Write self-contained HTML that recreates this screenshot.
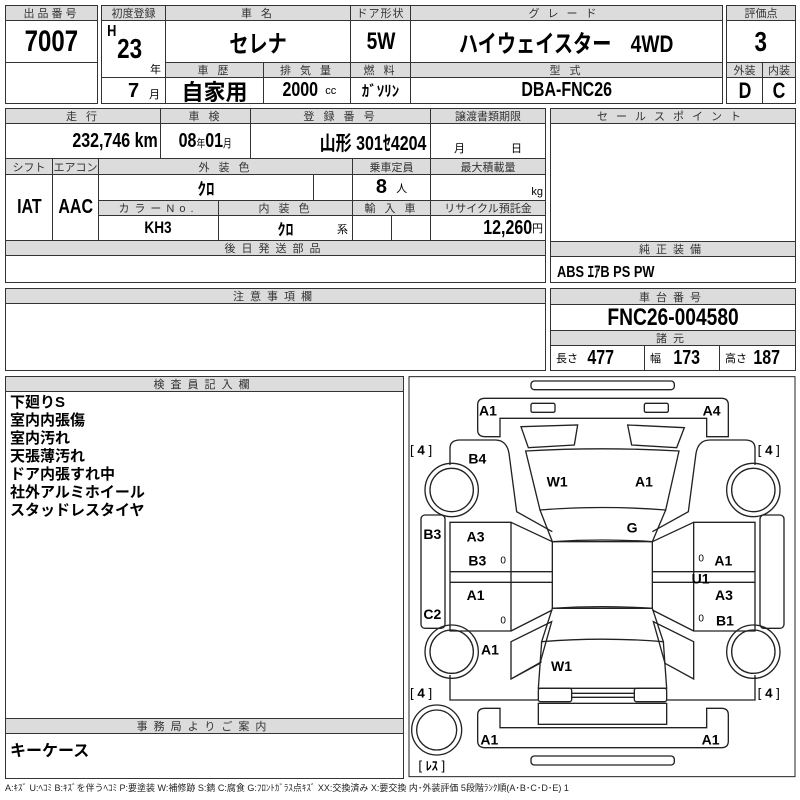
<!DOCTYPE html>
<html><head><meta charset="utf-8"><style>
*{margin:0;padding:0;box-sizing:border-box}
body{width:800px;height:800px;background:#fff;position:relative;overflow:hidden;font-family:"Liberation Sans","Noto Sans CJK JP",sans-serif;color:#000}
.b{position:absolute;border:1px solid #333;display:flex;align-items:center;justify-content:center;white-space:nowrap;overflow:hidden}
.h{background:#dcdcdc;font-size:11px;letter-spacing:3px;color:#333}
.v{font-weight:bold;font-size:20px}
.k{display:inline-block;transform:scaleX(.8)}
.s{font-size:11px;font-weight:normal}
</style></head><body>
<!-- top left -->
<div class="b" style="left:5px;top:5px;width:93px;height:99px;"></div>
<div class="b h" style="left:5px;top:5px;width:93px;height:16px">出品番号</div>
<div class="b v" style="left:5px;top:20px;width:93px;height:43px;font-size:30px"><span class="k">7007</span></div>
<!-- top middle -->
<div class="b" style="left:101px;top:5px;width:622px;height:99px"></div>
<div class="b h" style="left:101px;top:5px;width:65px;height:16px;letter-spacing:0">初度登録</div>
<div class="b h" style="left:165px;top:5px;width:186px;height:16px">車 名</div>
<div class="b h" style="left:350px;top:5px;width:61px;height:16px;letter-spacing:1px">ドア形状</div>
<div class="b h" style="left:410px;top:5px;width:313px;height:16px;letter-spacing:8px">グレード</div>
<div class="b" style="left:101px;top:20px;width:65px;height:84px;display:block">
 <span style="position:absolute;left:4px;top:2px;font-weight:bold;font-size:16px" class="k">H</span>
 <span style="position:absolute;left:12px;top:12px;font-weight:bold;font-size:28px" class="k">23</span>
 <span style="position:absolute;left:48px;top:40px;font-size:11px">年</span>
 <div style="position:absolute;left:0;top:56px;width:64px;border-top:1px solid #333"></div>
 <span style="position:absolute;left:26px;top:59px;font-weight:bold;font-size:20px">7</span>
 <span style="position:absolute;left:47px;top:65px;font-size:11px">月</span>
</div>
<div class="b v" style="left:165px;top:20px;width:186px;height:43px;font-size:24px"><span class="k">セレナ</span></div>
<div class="b v" style="left:350px;top:20px;width:61px;height:43px;font-size:24px"><span class="k">5W</span></div>
<div class="b v" style="left:410px;top:20px;width:313px;height:43px;font-size:24px"><span class="k">ハイウェイスター　4WD</span></div>
<div class="b h" style="left:165px;top:62px;width:99px;height:16px">車 歴</div>
<div class="b h" style="left:263px;top:62px;width:88px;height:16px">排 気 量</div>
<div class="b h" style="left:350px;top:62px;width:61px;height:16px">燃 料</div>
<div class="b h" style="left:410px;top:62px;width:313px;height:16px">型 式</div>
<div class="b v" style="left:165px;top:77px;width:99px;height:27px;font-size:22px">自家用</div>
<div class="b v" style="left:263px;top:77px;width:88px;height:27px"><span class="k">2000</span><span class="s">&nbsp;cc</span></div>
<div class="b v" style="left:350px;top:77px;width:61px;height:27px;font-size:15px">ｶﾞｿﾘﾝ</div>
<div class="b v" style="left:410px;top:77px;width:313px;height:27px"><span class="k">DBA-FNC26</span></div>
<!-- top right -->
<div class="b h" style="left:726px;top:5px;width:70px;height:16px;letter-spacing:0">評価点</div>
<div class="b v" style="left:726px;top:20px;width:70px;height:43px;font-size:28px"><span class="k">3</span></div>
<div class="b h" style="left:726px;top:62px;width:37px;height:16px;letter-spacing:0">外装</div>
<div class="b h" style="left:762px;top:62px;width:34px;height:16px;letter-spacing:0">内装</div>
<div class="b v" style="left:726px;top:77px;width:37px;height:27px;font-size:22px"><span class="k">D</span></div>
<div class="b v" style="left:762px;top:77px;width:34px;height:27px;font-size:22px"><span class="k">C</span></div>
<!-- second block -->
<div class="b h" style="left:5px;top:108px;width:156px;height:16px">走 行</div>
<div class="b h" style="left:160px;top:108px;width:91px;height:16px">車 検</div>
<div class="b h" style="left:250px;top:108px;width:181px;height:16px">登 録 番 号</div>
<div class="b h" style="left:430px;top:108px;width:116px;height:16px;letter-spacing:0">譲渡書類期限</div>
<div class="b v" style="left:5px;top:123px;width:156px;height:36px;justify-content:flex-end;padding-right:2px"><span class="k" style="transform-origin:right">232,746 km</span></div>
<div class="b v" style="left:160px;top:123px;width:91px;height:36px"><span class="k">08<span class="s">年</span>01<span class="s">月</span></span></div>
<div class="b v" style="left:250px;top:123px;width:181px;height:36px;justify-content:flex-end;padding-right:4px"><span class="k" style="transform-origin:right">山形 301ｾ4204</span></div>
<div class="b" style="left:430px;top:123px;width:116px;height:36px;align-items:flex-end;justify-content:space-around;font-size:11px;padding-bottom:2px"><span>月</span><span>日</span></div>
<div class="b h" style="left:5px;top:158px;width:48px;height:17px;letter-spacing:0">シフト</div>
<div class="b h" style="left:52px;top:158px;width:47px;height:17px;letter-spacing:0">エアコン</div>
<div class="b h" style="left:98px;top:158px;width:255px;height:17px">外 装 色</div>
<div class="b h" style="left:352px;top:158px;width:79px;height:17px;letter-spacing:0">乗車定員</div>
<div class="b h" style="left:430px;top:158px;width:116px;height:17px;letter-spacing:0">最大積載量</div>
<div class="b v" style="left:5px;top:174px;width:48px;height:67px"><span class="k">IAT</span></div>
<div class="b v" style="left:52px;top:174px;width:47px;height:67px"><span class="k">AAC</span></div>
<div class="b v" style="left:98px;top:174px;width:216px;height:27px;font-size:17px">ｸﾛ</div>
<div class="b" style="left:313px;top:174px;width:40px;height:27px"></div>
<div class="b v" style="left:352px;top:174px;width:79px;height:27px">8<span class="s">&nbsp;&nbsp;&nbsp;人</span></div>
<div class="b" style="left:430px;top:174px;width:116px;height:27px;justify-content:flex-end;align-items:flex-end;font-size:11px;padding:0 2px 2px 0">kg</div>
<div class="b h" style="left:98px;top:200px;width:121px;height:16px;letter-spacing:5px">カラーNo.</div>
<div class="b h" style="left:218px;top:200px;width:135px;height:16px">内 装 色</div>
<div class="b h" style="left:352px;top:200px;width:79px;height:16px">輸 入 車</div>
<div class="b h" style="left:430px;top:200px;width:116px;height:16px;letter-spacing:0">リサイクル預託金</div>
<div class="b v" style="left:98px;top:215px;width:121px;height:26px;font-size:17px"><span class="k">KH3</span></div>
<div class="b v" style="left:218px;top:215px;width:135px;height:26px;font-size:16px">ｸﾛ<span class="s" style="position:absolute;right:4px;bottom:3px">系</span></div>
<div class="b" style="left:352px;top:215px;width:40px;height:26px"></div>
<div class="b" style="left:391px;top:215px;width:40px;height:26px"></div>
<div class="b v" style="left:430px;top:215px;width:116px;height:26px;justify-content:flex-end;padding-right:2px"><span class="k" style="transform-origin:right">12,260</span><span class="s">円</span></div>
<div class="b h" style="left:5px;top:240px;width:541px;height:16px;letter-spacing:6px">後日発送部品</div>
<div class="b" style="left:5px;top:255px;width:541px;height:28px"></div>
<!-- right block -->
<div class="b h" style="left:550px;top:108px;width:246px;height:16px;letter-spacing:8px">セールスポイント</div>
<div class="b" style="left:550px;top:123px;width:246px;height:119px"></div>
<div class="b h" style="left:550px;top:241px;width:246px;height:16px;letter-spacing:6px">純正装備</div>
<div class="b v" style="left:550px;top:256px;width:246px;height:27px;justify-content:flex-start;padding-left:6px;font-size:16px"><span class="k" style="transform-origin:left">ABS ｴｱB PS PW</span></div>
<!-- caution -->
<div class="b h" style="left:5px;top:288px;width:541px;height:16px;letter-spacing:6px">注意事項欄</div>
<div class="b" style="left:5px;top:303px;width:541px;height:68px"></div>
<div class="b h" style="left:550px;top:288px;width:246px;height:17px;letter-spacing:6px">車台番号</div>
<div class="b v" style="left:550px;top:304px;width:246px;height:27px;font-size:24px"><span class="k">FNC26-004580</span></div>
<div class="b h" style="left:550px;top:330px;width:246px;height:16px;letter-spacing:6px">諸元</div>
<div class="b v" style="left:550px;top:345px;width:95px;height:26px;justify-content:flex-start;padding-left:5px"><span class="s">長さ&nbsp;&nbsp;</span><span class="k">477</span></div>
<div class="b v" style="left:644px;top:345px;width:76px;height:26px;justify-content:flex-start;padding-left:5px"><span class="s">幅&nbsp;&nbsp;&nbsp;</span><span class="k">173</span></div>
<div class="b v" style="left:719px;top:345px;width:77px;height:26px;justify-content:flex-start;padding-left:5px"><span class="s">高さ&nbsp;</span><span class="k">187</span></div>
<!-- inspector -->
<div class="b h" style="left:5px;top:376px;width:399px;height:16px;letter-spacing:6px">検査員記入欄</div>
<div class="b" style="left:5px;top:391px;width:399px;height:328px;display:block;padding:2px 4px;font-weight:bold;font-size:15px;line-height:18px;white-space:normal">下廻りS<br>室内内張傷<br>室内汚れ<br>天張薄汚れ<br>ドア内張すれ中<br>社外アルミホイール<br>スタッドレスタイヤ</div>
<div class="b h" style="left:5px;top:718px;width:399px;height:16px;letter-spacing:6px">事務局よりご案内</div>
<div class="b" style="left:5px;top:733px;width:399px;height:46px;display:block;padding:3px 4px;font-weight:bold;font-size:16px">キーケース</div>
<!-- diagram -->
<svg style="position:absolute;left:405px;top:375px" width="395" height="420" viewBox="0 0 1185 1260">
<g fill="none" stroke="#222" stroke-width="4">
<rect x="12" y="5" width="1158" height="1200" stroke-width="3"/>
<rect x="378" y="18" width="430" height="26" rx="10"/>
<path d="M240 70H950Q970 70 970 90V185H905V130H285V185H240Q218 185 218 165V90Q218 70 240 70Z"/>
<rect x="378" y="85" width="72" height="27" rx="5"/>
<rect x="718" y="85" width="72" height="27" rx="5"/>
<path d="M348 155L518 150L508 210L370 218Z M668 150L838 158L815 218L680 210Z"/>
<path d="M362 228Q592 215 822 228L782 405Q592 390 405 405Z"/>
<path d="M405 405L442 500Q592 490 742 500L782 405"/>
<rect x="442" y="500" width="300" height="200"/>
<path d="M442 700L410 800Q592 785 775 800L742 700Q592 690 442 700Z"/>
<path d="M410 800L400 940H785L775 800"/>
<rect x="400" y="940" width="100" height="40" rx="6"/><rect x="688" y="940" width="97" height="40" rx="6"/>
<path d="M500 955H688M500 967H688"/>
<rect x="400" y="985" width="385" height="63"/>
<path d="M240 1118H950Q970 1118 970 1098V1020Q970 1000 950 1000H905V1058H285V1000H240Q218 1000 218 1020V1098Q218 1118 240 1118Z"/>
<rect x="378" y="1143" width="430" height="27" rx="10"/>
<path d="M135 270V220Q135 195 165 195H270Q305 195 312 235L335 410L442 470"/>
<path d="M1050 270V220Q1050 195 1020 195H915Q880 195 873 235L850 410L742 470"/>
<path d="M135 442H318V768H135Z M135 590H442M135 622H442 M318 442L442 500M318 768L442 705"/>
<path d="M1050 442H866V768H1050Z M1050 590H742M1050 622H742 M866 442L742 500M866 768L742 705"/>
<rect x="48" y="420" width="72" height="340" rx="12"/>
<rect x="1065" y="420" width="72" height="340" rx="12"/>
<path d="M318 800L440 740L405 865L318 912Z M135 900V975H400 M318 912L410 860"/>
<path d="M866 800L745 740L780 865L866 912Z M1050 900V975H785"/>
<circle cx="140" cy="345" r="80"/><circle cx="140" cy="345" r="65"/>
<circle cx="140" cy="830" r="80"/><circle cx="140" cy="830" r="65"/>
<circle cx="1045" cy="345" r="80"/><circle cx="1045" cy="345" r="65"/>
<circle cx="1045" cy="830" r="80"/><circle cx="1045" cy="830" r="65"/>
<circle cx="95" cy="1065" r="75"/><circle cx="95" cy="1065" r="60"/>
</g>
<g font-family="Liberation Sans,sans-serif" font-weight="bold" font-size="42" fill="#000">
<text x="222" y="122">A1</text><text x="893" y="122">A4</text>
<text x="190" y="265">B4</text><text x="425" y="335">W1</text><text x="690" y="335">A1</text>
<text x="665" y="472">G</text>
<text x="55" y="492">B3</text><text x="185" y="500">A3</text><text x="190" y="572">B3</text>
<text x="185" y="675">A1</text><text x="55" y="732">C2</text><text x="228" y="838">A1</text>
<text x="438" y="888">W1</text>
<text x="928" y="572">A1</text><text x="860" y="625">U1</text><text x="930" y="675">A3</text><text x="933" y="752">B1</text>
<text x="226" y="1108">A1</text><text x="890" y="1108">A1</text>
</g>
<g font-family="Liberation Sans,sans-serif" font-size="40" fill="#000">
<text x="286" y="565" font-size="30">0</text><text x="286" y="745" font-size="30">0</text>
<text x="880" y="560" font-size="30">0</text><text x="880" y="740" font-size="30">0</text>
<text x="15" y="238">[ <tspan font-weight="bold">4</tspan> ]</text><text x="1058" y="238">[ <tspan font-weight="bold">4</tspan> ]</text>
<text x="15" y="968">[ <tspan font-weight="bold">4</tspan> ]</text><text x="1058" y="968">[ <tspan font-weight="bold">4</tspan> ]</text>
<text x="40" y="1185">[ <tspan font-weight="bold" font-size="36">ﾚｽ</tspan> ]</text>
</g>
</svg>
<div style="position:absolute;left:5px;top:781px;font-size:9px;white-space:nowrap;color:#222">A:ｷｽﾞ U:ﾍｺﾐ B:ｷｽﾞを伴うﾍｺﾐ P:要塗装 W:補修跡 S:錆 C:腐食 G:ﾌﾛﾝﾄｶﾞﾗｽ点ｷｽﾞ XX:交換済み X:要交換 内･外装評価 5段階ﾗﾝｸ順(A･B･C･D･E) 1</div>
</body></html>
